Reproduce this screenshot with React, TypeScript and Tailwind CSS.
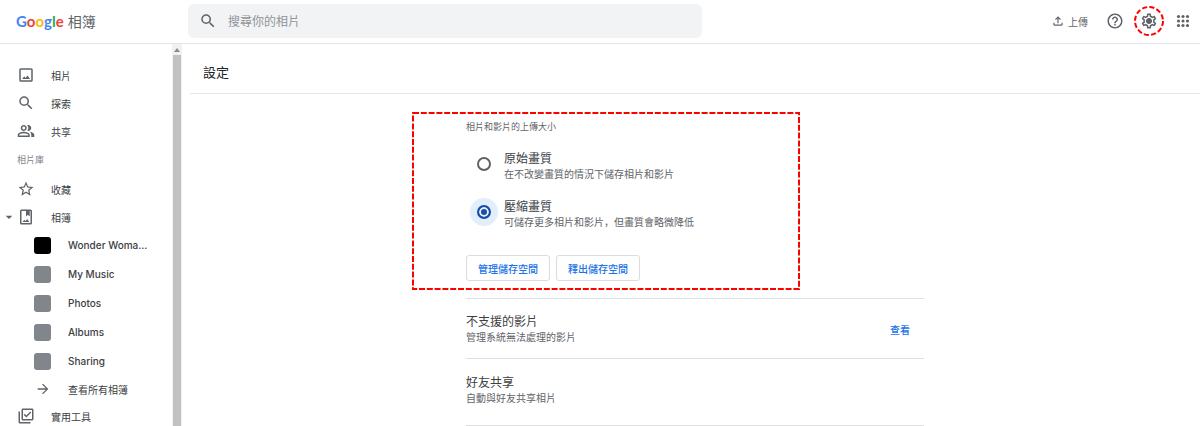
import type { ReactNode } from 'react';
import {
  MdArrowDropDown,
  MdArrowForward,
  MdHelpOutline,
  MdOutlineFileUpload,
  MdOutlineLibraryAddCheck,
  MdOutlinePeopleAlt,
  MdOutlineSettings,
  MdSearch,
  MdStarBorder,
} from 'react-icons/md';

const ICON = 'w-[18px] h-[18px] shrink-0 text-[#5f6368]';

function PhotoIcon() {
  return (
    <svg viewBox="0 0 24 24" className={ICON} fill="none" stroke="currentColor" strokeWidth="2">
      <rect x="4" y="4" width="16" height="16" rx="1" />
      <path d="M7 17.2l2.6-3.4 1.8 2.2 2.6-3.4 3.4 4.6z" fill="currentColor" stroke="none" />
    </svg>
  );
}

function AlbumIcon() {
  return (
    <svg viewBox="0 0 24 24" className={ICON} fill="none" stroke="currentColor" strokeWidth="2">
      <rect x="5" y="3" width="14" height="18" rx="1" />
      <path d="M12 3h5v8l-2.500-1.800L12 11z" fill="currentColor" stroke="none" />
      <path d="M7.500 18.500l2.200-2.800 1.600 1.900 2.200-2.900 3 3.800z" fill="currentColor" stroke="none" />
    </svg>
  );
}

function AppsIcon() {
  return (
    <svg viewBox="0 0 24 24" className={ICON} fill="currentColor">
      {[6, 12, 18].map((cy) =>
        [6, 12, 18].map((cx) => <circle key={`${cx}-${cy}`} cx={cx} cy={cy} r="2.100" />)
      )}
    </svg>
  );
}

const albums = [
  { name: 'Wonder Woma...', color: 'bg-black' },
  { name: 'My Music', color: 'bg-[#80868b]' },
  { name: 'Photos', color: 'bg-[#80868b]' },
  { name: 'Albums', color: 'bg-[#80868b]' },
  { name: 'Sharing', color: 'bg-[#80868b]' },
];

interface NavItemProps {
  icon: ReactNode;
  label: string;
  expanded?: boolean;
}

function NavItem({ icon, label, expanded }: NavItemProps) {
  return (
    <li>
      <a href="#" className="flex items-center h-7">
        <span className="w-[17px] shrink-0 flex justify-center">
          {expanded && <MdArrowDropDown className="w-4 h-4 shrink-0 text-[#5f6368]" />}
        </span>
        {icon}
        <span className="ml-4">{label}</span>
      </a>
    </li>
  );
}

function Header() {
  return (
    <header className="flex items-center h-11 shrink-0 border-b border-[#e4e6e8] pr-2 pb-px">
      <a href="#" className="w-[188px] shrink-0 pl-4 flex items-center gap-1">
        <span className="font-['Lato','Noto_Sans_CJK_TC',sans-serif] text-[15px] leading-5 font-bold">
          <span className="text-[#4285f4]">G</span>
          <span className="text-[#ea4335]">o</span>
          <span className="text-[#fbbc04]">o</span>
          <span className="text-[#4285f4]">g</span>
          <span className="text-[#34a853]">l</span>
          <span className="text-[#ea4335]">e</span>
        </span>
        <span className="text-sm leading-5 text-[#5f6368]">相簿</span>
      </a>

      <label className="flex items-center flex-1 max-w-[514px] h-[34px] bg-[#f1f3f4] rounded-md pl-[11px]">
        <MdSearch className={ICON} />
        <input
          type="text"
          aria-label="搜尋你的相片"
          placeholder="搜尋你的相片"
          className="flex-1 ml-[11px] text-xs bg-transparent outline-none placeholder:text-[#8f9499]"
        />
      </label>

      <div className="ml-auto flex items-center gap-4">
        <button className="flex items-center gap-[3px] pr-0.5 text-[10px] text-[#5f6368]">
          <MdOutlineFileUpload className="w-3.5 h-3.5" />
          上傳
        </button>
        <button aria-label="說明">
          <MdHelpOutline className={ICON} />
        </button>
        <button aria-label="設定" className="relative">
          <MdOutlineSettings className={ICON} />
          {/* highlight ring */}
          <svg viewBox="0 0 30 30" className="absolute -inset-1.5 w-[30px] h-[30px]" fill="none">
            <circle cx="15" cy="15" r="2.500" fill="#5f6368" />
            <circle cx="15" cy="15" r="14" stroke="#f00" strokeWidth="2" strokeDasharray="5 2.330" />
          </svg>
        </button>
        <button aria-label="Google 應用程式">
          <AppsIcon />
        </button>
      </div>
    </header>
  );
}

function Sidebar() {
  return (
    <>
      <nav className="w-[172px] shrink-0 pt-[17px] overflow-hidden text-[10px] text-[#3c4043]">
        <ul>
          <NavItem icon={<PhotoIcon />} label="相片" />
          <NavItem icon={<MdSearch className={ICON} />} label="探索" />
          <NavItem icon={<MdOutlinePeopleAlt className={ICON} />} label="共享" />
          <li className="flex items-center h-[30px] pl-[17px] text-[9px] text-[#80868b]">相片庫</li>
          <NavItem icon={<MdStarBorder className={ICON} />} label="收藏" />
          <NavItem icon={<AlbumIcon />} label="相簿" expanded />
          {albums.map((album) => (
            <li key={album.name}>
              <a href="#" className="flex items-center h-[29px] pl-[34px] gap-[17px]">
                <span className={`w-[17px] h-[17px] rounded-[3px] ${album.color}`} />
                <span className="font-['Inter',sans-serif] font-medium">{album.name}</span>
              </a>
            </li>
          ))}
          <li>
            <a href="#" className="flex items-center h-[26px] pl-[34px] gap-[17px]">
              <span className="w-[17px] flex justify-center">
                <MdArrowForward className="w-4 h-4 text-[#5f6368]" />
              </span>
              查看所有相簿
            </a>
          </li>
          <NavItem icon={<MdOutlineLibraryAddCheck className={ICON} />} label="實用工具" />
        </ul>
      </nav>

      {/* Scrollbar */}
      <div className="w-2.5 shrink-0 bg-[#f1f1f1] flex flex-col">
        <div className="h-[11px] flex items-center justify-center">
          <svg viewBox="0 0 6 4" className="w-1.5 h-1" fill="#8a8a8a">
            <path d="M3 0l3 4H0z" />
          </svg>
        </div>
        <div className="flex-1 mx-px bg-[#c1c1c1]" />
      </div>
    </>
  );
}

interface QualityOptionProps {
  id: string;
  title: string;
  description: string;
  defaultChecked?: boolean;
}

function QualityOption({ id, title, description, defaultChecked }: QualityOptionProps) {
  return (
    <div className="flex items-start gap-1.5 pl-1">
      <span className="w-7 h-7 shrink-0 rounded-full flex items-center justify-center has-checked:bg-[#e3eefb]">
        <input
          type="radio"
          name="quality"
          id={id}
          defaultChecked={defaultChecked}
          className="appearance-none w-3.5 h-3.5 rounded-full border-2 border-[#5f6368] bg-white checked:border-[#174ea6] checked:bg-[#174ea6] checked:shadow-[inset_0_0_0_2px_#e3eefb]"
        />
      </span>
      <label htmlFor={id} className="leading-4">
        <span className="block text-xs leading-4 text-[#3c4043]">{title}</span>
        <span
          lang="zh-Hans"
          className="block font-['Noto_Sans_CJK_SC',sans-serif] text-[10px] leading-4 text-[#5f6368]"
        >
          {description}
        </span>
      </label>
    </div>
  );
}

const OUTLINE_BUTTON =
  'h-[26px] px-[11px] border border-[#dadce0] rounded-[3px] text-[10px] font-medium text-[#1a73e8]';

export default function App() {
  return (
    <div lang="zh-Hant" className="h-screen flex flex-col overflow-hidden bg-white font-['Noto_Sans_CJK_TC',sans-serif]">
      <Header />
      <div className="flex flex-1 min-h-0">
        <Sidebar />

        <main className="flex-1 min-w-0 ml-2 overflow-hidden">
          <div className="flex items-center h-[50px] pt-1.5 pl-[13px] border-b border-[#e4e6e8]">
            <h1 className="text-[13px] text-[#202124]">設定</h1>
          </div>

          <div className="w-full max-w-[458px] mx-auto">
            <section className="relative pt-[25px] pb-[17px] border-b border-[#e0e0e0]">
              <h2 className="text-[9px] leading-4 text-[#5f6368]">相片和影片的上傳大小</h2>
              <div className="mt-[15px] flex flex-col gap-4">
                <QualityOption
                  id="original"
                  title="原始畫質"
                  description="在不改變畫質的情況下儲存相片和影片"
                />
                <QualityOption
                  id="compressed"
                  title="壓縮畫質"
                  description="可儲存更多相片和影片，但畫質會略微降低"
                  defaultChecked
                />
              </div>
              <div className="mt-[25px] flex gap-1.5">
                <button className={OUTLINE_BUTTON}>管理儲存空間</button>
                <button className={OUTLINE_BUTTON}>釋出儲存空間</button>
              </div>
              {/* highlight frame */}
              <svg
                className="absolute top-[18px] left-[-54px] w-[388px] h-[178px] overflow-visible pointer-events-none"
                fill="none"
              >
                <rect x="1" y="1" width="386" height="176" stroke="#f00" strokeWidth="2" strokeDasharray="6 1.800" />
              </svg>
            </section>

            <section className="flex items-center justify-between pt-3.5 pb-[13px] pr-3.5 border-b border-[#e0e0e0]">
              <div>
                <h2 className="text-xs leading-4 text-[#3c4043]">不支援的影片</h2>
                <p className="text-[10px] leading-4 text-[#5f6368]">管理系統無法處理的影片</p>
              </div>
              <a href="#" className="text-[10px] font-medium text-[#1a73e8]">
                查看
              </a>
            </section>

            <section className="pt-[15px] pb-[19px] border-b border-[#e0e0e0]">
              <h2 className="text-xs leading-4 text-[#3c4043]">好友共享</h2>
              <p className="text-[10px] leading-4 text-[#5f6368]">自動與好友共享相片</p>
            </section>
          </div>
        </main>
      </div>
    </div>
  );
}
